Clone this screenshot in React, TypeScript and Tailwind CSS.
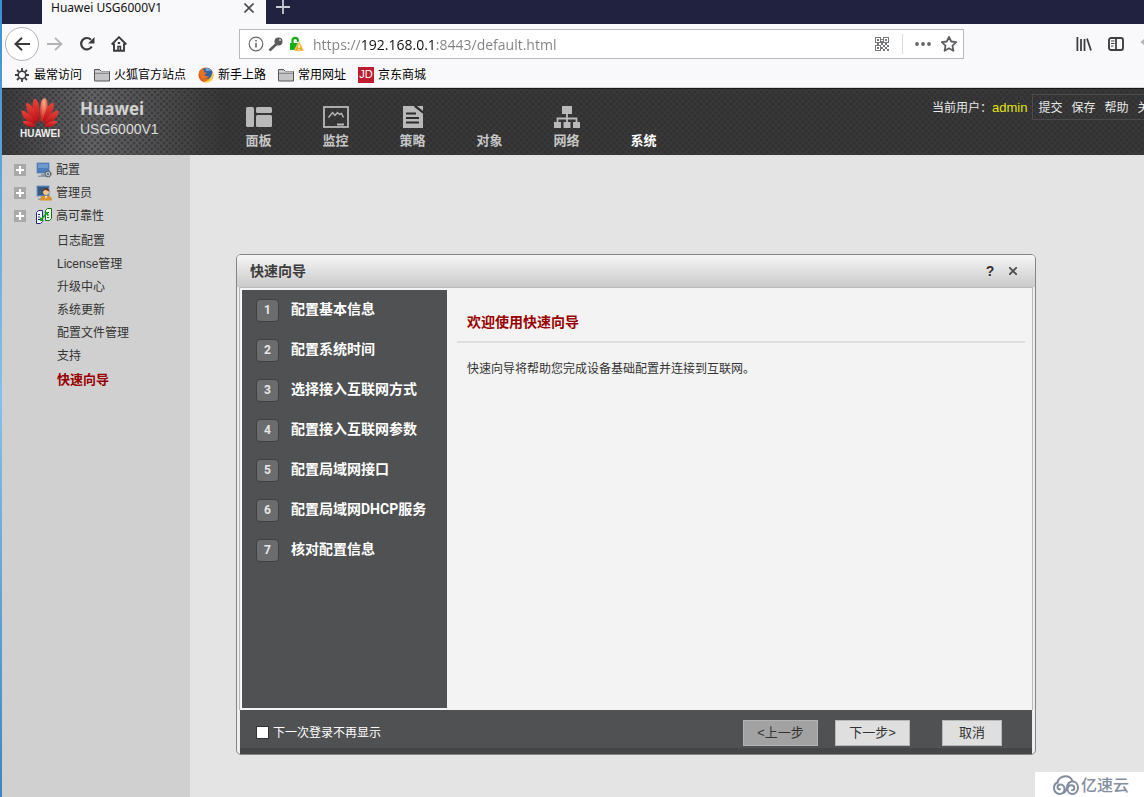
import type { ReactNode } from 'react';
import { clsx } from 'clsx';

const cjk = "font-['Liberation_Sans','Noto_Sans_CJK_SC',sans-serif]";
const ui = "font-['Open_Sans','Noto_Sans_CJK_SC',sans-serif]";

/* ---------- Browser icons ---------- */

function FolderIcon() {
  return (
    <svg width="16" height="14" viewBox="0 0 16 14" aria-hidden="true">
      <path d="M.5 12.5v-11h5.2l1.6 2h8.2v9.5H.5z" fill="#c4c4c6" stroke="#55565a" />
      <path d="M1 5h14" stroke="#55565a" />
      <path d="M1 4h14" stroke="#e9e9ea" />
    </svg>
  );
}

function GearIcon() {
  return (
    <svg width="14" height="14" viewBox="0 0 14 14" fill="none" stroke="#3f3f43" aria-hidden="true">
      <circle cx="7" cy="7" r="3.8" strokeWidth="1.6" />
      <path
        d="M7 0v3M7 11v3M0 7h3M11 7h3M2 2l2 2M10 10l2 2M12 2l-2 2M4 10l-2 2"
        strokeWidth="1.8"
      />
    </svg>
  );
}

function FirefoxIcon() {
  return (
    <svg width="16" height="16" viewBox="0 0 16 16" aria-hidden="true">
      <defs>
        <linearGradient id="ff-fox" x1="0" y1="0" x2="1" y2="1">
          <stop offset="0" stopColor="#d8541b" />
          <stop offset=".6" stopColor="#e2641b" />
          <stop offset="1" stopColor="#f6bb2a" />
        </linearGradient>
      </defs>
      <circle cx="8" cy="8" r="7.6" fill="url(#ff-fox)" />
      <circle cx="9" cy="6.4" r="5.4" fill="#2f62ab" />
      <path d="M7.4 1.4c2.4-.6 5 .2 6.2 2.6-1.8-1-3.6-.6-5 .2z" fill="#6cb6e6" />
      <path d="M1 4.5C2 3 3 2.6 3.5 1.5c.6 1 1.6 1.600 3.300 1.800L5.800 5c1 .6 2 .4 3 .6-.2 1.200-1.600 1.500-2.200 2.200.4 1.500 2.400 2 4.400 1-1 3-5.500 4-8 1.700z" fill="#e8731f" />
      <path d="M14.5 4.800c1.500 3.400.5 7.600-3 9.600-2 1-4.500 1-6.300.2 4 .4 7.800-2 9.300-9.800z" fill="#fbd13a" />
    </svg>
  );
}

function QrIcon() {
  return (
    <svg width="14" height="14" viewBox="0 0 14 14" fill="#75767a" aria-hidden="true">
      <path fillRule="evenodd" d="M0 0h6v6H0zM1 1v4h4V1zM8 0h6v6H8zM9 1v4h4V1zM0 8h6v6H0zM1 9v4h4V9z" />
      <path d="M2 2h2v2H2zM10 2h2v2h-2zM2 10h2v2H2zM6 2h2v1H6zM6 4h2v2H6zM2 6h2v2H2zM6 6h2v2H6zM10 6h2v2h-2zM8 8h2v2H8zM12 8h2v2h-2zM6 10h2v2H6zM10 10h2v2h-2zM8 12h2v2H8zM12 12h2v2h-2z" />
    </svg>
  );
}

function IconButton({ label, className, children }: { label: string; className?: string; children: ReactNode }) {
  return (
    <button type="button" aria-label={label} className={clsx('flex shrink-0 items-center justify-center', className)}>
      {children}
    </button>
  );
}

function TabStrip() {
  return (
    <div className="flex h-6 bg-[#20223f] pl-10">
      <div className="flex w-56 items-center justify-between bg-[#f9f9fb] pr-[9px] pb-2 pl-2">
        <span className="pl-px font-['Noto_Sans',sans-serif] text-xs leading-4 text-[#111]">Huawei USG6000V1</span>
        <IconButton label="关闭标签页" className="h-4 w-4">
          <svg width="10" height="10" viewBox="0 0 10 10" stroke="#4a4a4f" strokeWidth="1.6">
            <path d="M.5.5l9 9M9.5.5l-9 9" />
          </svg>
        </IconButton>
      </div>
      <IconButton label="新建标签页" className="ml-[9px] h-[14px] w-4">
        <svg width="14" height="14" viewBox="0 0 14 14" stroke="#c9c9d4" strokeWidth="1.8">
          <path d="M7 0v14M0 7h14" />
        </svg>
      </IconButton>
    </div>
  );
}

function NavBar() {
  return (
    <div className="flex h-10 items-center overflow-hidden bg-[#f9f9fb] pl-[3px]">
      <IconButton label="后退" className="h-[34px] w-[34px] rounded-full border border-[#b4b4b8] bg-white">
        <svg width="16" height="14" viewBox="0 0 16 14" fill="none" stroke="#3b3b3f" strokeWidth="2">
          <path d="M16 7H1.5M8 .8L1.5 7 8 13.2" />
        </svg>
      </IconButton>
      <IconButton label="前进" className="w-8">
        <svg width="16" height="14" viewBox="0 0 16 14" fill="none" stroke="#b3b3b6" strokeWidth="1.8">
          <path d="M0 7h14.5M8 .8L14.5 7 8 13.2" />
        </svg>
      </IconButton>
      <IconButton label="重新加载" className="w-8">
        <svg width="16" height="16" viewBox="0 0 16 16" fill="none" stroke="#3b3b3f" strokeWidth="2.2">
          <path d="M12.8 10.5A5.7 5.7 0 1 1 12 3.8" />
          <path d="M15.5 1v6.5H9z" fill="#3b3b3f" stroke="none" />
        </svg>
      </IconButton>
      <IconButton label="主页" className="w-8">
        <svg width="16" height="16" viewBox="0 0 16 16" fill="none" stroke="#3b3b3f" strokeWidth="1.9">
          <path d="M.7 8.5L8 1.2l7.3 7.3M3 7.5v7.3h10V7.5" />
          <path d="M7 15v-4.5h2.4V15" strokeWidth="1.6" />
          <path d="M6.8 6h2.4v2H6.8z" fill="#3b3b3f" stroke="none" />
        </svg>
      </IconButton>

      <div className="ml-[104px] flex h-[30px] flex-1 items-center gap-1 border border-[#b9b9bd] bg-white pr-1 pl-2">
        <svg width="16" height="16" viewBox="0 0 16 16" fill="none" stroke="#66666a" className="shrink-0">
          <circle cx="8" cy="8" r="6.8" strokeWidth="1.2" />
          <path d="M8 7v4.5M8 4v1.5" strokeWidth="1.6" />
        </svg>
        <svg width="16" height="16" viewBox="0 0 16 16" className="shrink-0">
          <path d="M9.5 7L1.5 14.5" stroke="#5c5c60" strokeWidth="2.6" />
          <circle cx="10.5" cy="5.5" r="4" fill="#5c5c60" />
          <circle cx="12" cy="4" r="1" fill="#d5d5d5" />
        </svg>
        <svg width="16" height="16" viewBox="0 0 16 16" className="shrink-0">
          <path d="M4.5 8V4.5a2.7 2.7 0 0 1 5.4 0V6" fill="none" stroke="#12b012" strokeWidth="2.2" />
          <path d="M2 7h9v7H2z" fill="#12b012" />
          <path d="M11 5l5 10H6z" fill="#fba81c" stroke="#fff" strokeWidth=".5" />
          <path d="M11 8.5V12M11 13v1" stroke="#fff" strokeWidth="1.3" />
        </svg>
        <input
          type="text"
          aria-label="地址"
          defaultValue="https://192.168.0.1:8443/default.html"
          className={clsx(
            'ml-[5px] min-w-0 flex-1 bg-clip-text text-[14px] text-transparent outline-none',
            'bg-[linear-gradient(90deg,#808084_48px,#111_48px,#111_122px,#808084_122px)]',
            ui,
          )}
        />
        <IconButton label="二维码" className="h-5 w-6">
          <QrIcon />
        </IconButton>
        <div className="mx-1 h-5 w-px bg-[#dcdcdf]" />
        <IconButton label="页面操作" className="h-5 w-6">
          <svg width="16" height="4" viewBox="0 0 16 4" fill="#66666a">
            <circle cx="2" cy="2" r="1.9" />
            <circle cx="8" cy="2" r="1.9" />
            <circle cx="14" cy="2" r="1.9" />
          </svg>
        </IconButton>
        <IconButton label="添加书签" className="h-5 w-5">
          <svg width="16" height="16" viewBox="0 0 16 16" fill="none" stroke="#5e5e62" strokeWidth="1.8" strokeLinejoin="round">
            <path d="M8 .9l2.2 4.6 5 .7-3.700 3.400.9 5.200L8 12.300l-4.400 2.500.9-5.200L.8 6.200l5-.7z" />
          </svg>
        </IconButton>
      </div>

      <div className="ml-28 flex w-[68px] shrink-0 gap-4 overflow-hidden">
        <IconButton label="我的足迹" className="w-4">
          <svg width="16" height="14" viewBox="0 0 16 14" fill="none" stroke="#3f3f43" strokeWidth="1.8">
            <path d="M1.4 0v14M5 2v12M8.5 2v12M11 1.5l4 12" />
          </svg>
        </IconButton>
        <IconButton label="侧栏" className="w-4">
          <svg width="16" height="14" viewBox="0 0 16 14" fill="none" stroke="#3f3f43">
            <rect x="1" y="1" width="14" height="12" rx="2" strokeWidth="1.9" />
            <path d="M8 1v12" strokeWidth="1.8" />
            <path d="M3 4h3.5M3 6.5h3.5M3 9h2.5" />
          </svg>
        </IconButton>
        <IconButton label="更多" className="w-4">
          <svg width="16" height="14" viewBox="0 0 16 14" fill="none" stroke="#b3b3b6" strokeWidth="2">
            <path d="M7 1L2 5l5 4" />
          </svg>
        </IconButton>
      </div>
    </div>
  );
}

const bookmarks = [
  { label: '最常访问', icon: <GearIcon /> },
  { label: '火狐官方站点', icon: <FolderIcon /> },
  { label: '新手上路', icon: <FirefoxIcon /> },
  { label: '常用网址', icon: <FolderIcon /> },
  {
    label: '京东商城',
    icon: (
      <span className="flex h-4 w-4 items-center justify-center bg-[#c01c30] text-[11px] leading-none text-white">JD</span>
    ),
  },
];

function BookmarkBar() {
  return (
    <nav className={clsx('flex h-6 items-center gap-3 border-b border-[#d8d8da] bg-[#f9f9fb] pb-0.5 pl-3', cjk)}>
      {bookmarks.map((b) => (
        <a key={b.label} href="#" className="flex shrink-0 items-center gap-1 text-xs leading-4 text-black">
          <span className="flex w-4 justify-center">{b.icon}</span>
          {b.label}
        </a>
      ))}
    </nav>
  );
}

/* ---------- Device console header ---------- */

function HuaweiMark() {
  return (
    <svg width="40" height="31" viewBox="0 0 42 33" aria-hidden="true">
      <defs>
        <linearGradient id="petal" x1="0" y1="0" x2="0" y2="1">
          <stop offset="0" stopColor="#e8453a" />
          <stop offset="1" stopColor="#b80d15" />
        </linearGradient>
        <radialGradient id="shine" cx=".5" cy=".2" r=".7">
          <stop offset="0" stopColor="#f6b08c" />
          <stop offset="1" stopColor="#d8281f" />
        </radialGradient>
      </defs>
      <g fill="url(#petal)">
        <path d="M20 27C14 20 11 11 14.5 2 20 1 21.5 14 20 27z" />
        <path d="M22 27C20.5 14 20 1 27 1 32 8 28 20 22 27z" fill="url(#shine)" />
        <path d="M18.5 28C10 22 5 13 6.5 6 12 6 17 16 18.5 28z" />
        <path d="M23.5 28C32 22 37 13 35.5 6 30 6 25 16 23.5 28z" />
        <path d="M17 29.5C7 27 .5 21 1.5 14 8 15 14 22 17 29.5z" />
        <path d="M25 29.5C35 27 41.5 21 40.5 14 34 15 28 22 25 29.5z" />
        <path d="M16.5 31.5C9 33 4 30 2.5 25.500 8 25 14 27 16.5 31.5z" />
        <path d="M25.5 31.5C33 33 38 30 39.5 25.500 34 25 28 27 25.5 31.5z" />
      </g>
    </svg>
  );
}

const menu = [
  {
    label: '面板',
    icon: (
      <svg width="26" height="22" viewBox="0 0 26 22" fill="#b9b9b9">
        <rect y="1" width="8" height="20" rx="1.5" />
        <rect x="10" y="1" width="16" height="6" rx="1.5" />
        <rect x="10" y="9" width="16" height="12" rx="1.5" />
      </svg>
    ),
  },
  {
    label: '监控',
    icon: (
      <svg width="26" height="22" viewBox="0 0 26 22" fill="none" stroke="#b9b9b9">
        <rect x="1" y="1" width="24" height="20" strokeWidth="1.8" />
        <path d="M5.5 11.5l4-5 2.500 3 2.500-3 2 2 2-1 2 4" strokeWidth="1.4" />
        <path d="M14 18.500h7" strokeWidth="2" />
      </svg>
    ),
  },
  {
    label: '策略',
    icon: (
      <svg width="22" height="22" viewBox="0 0 22 22">
        <path d="M1 0h12l8 7v15H1z" fill="#b9b9b9" />
        <path d="M15 0h6v5z" fill="#b9b9b9" />
        <path d="M12.500 0l9 7" stroke="#2c2c2d" strokeWidth="1.6" />
        <path d="M4 7.5h10M4 12h13M4 16.5h13" stroke="#2c2c2d" strokeWidth="1.8" />
      </svg>
    ),
  },
  { label: '对象' },
  {
    label: '网络',
    icon: (
      <svg width="26" height="22" viewBox="0 0 26 22" fill="#b9b9b9">
        <path d="M8 0h10v8H8zM0 16h7v6H0zM9.5 16h7v6h-7zM19 16h7v6h-7z" />
        <path d="M13 8v8M3.5 17v-4.5h19V17" fill="none" stroke="#b9b9b9" strokeWidth="1.8" />
      </svg>
    ),
  },
  { label: '系统', active: true },
];

function DeviceHeader() {
  return (
    <header
      className={clsx(
        'flex h-[67px] overflow-hidden border-t border-[#1a1a1b] bg-[#39393a]',
        'bg-[radial-gradient(circle,#28282988_1px,transparent_2px),radial-gradient(circle,#28282988_1px,transparent_2px),linear-gradient(90deg,#3a3a3c,#666668_90px,#39393a_220px)]',
        'bg-[length:6px_6px,6px_6px,100%_100%] bg-[position:0_0,3px_3px,0_0]',
        cjk,
      )}
    >
      <div className="flex w-[218px] shrink-0 pl-[18px]">
        <div className="flex w-10 flex-col items-center pt-2">
          <HuaweiMark />
          <span className="text-[10px] leading-3 font-bold text-[#eee]">HUAWEI</span>
        </div>
        <div className="pt-2 pl-5">
          <div className={clsx('text-[17px] leading-6 font-bold text-[#d2d2d2]', ui)}>Huawei</div>
          <div className="text-sm leading-4 text-[#dcdcdc]">USG6000V1</div>
        </div>
      </div>
      <nav className="flex shrink-0">
        {menu.map((m) => (
          <a
            key={m.label}
            href="#"
            className={clsx(
              'flex w-[77px] flex-col items-center pt-4 text-[13px] leading-5 font-bold',
              m.active ? 'text-white' : 'text-[#c6c6c6]',
            )}
          >
            <span className="mb-0.5 flex h-6 shrink-0 items-center">{m.icon}</span>
            {m.label}
          </a>
        ))}
      </nav>
      <div className="ml-auto flex w-[212px] shrink-0 items-start pt-[5px] text-xs leading-6 whitespace-nowrap text-[#e8e8e8]">
        <span className="pt-0.5">当前用户：</span>
        <span className="pt-0.5 pr-[5px] text-[13px] text-[#e3e30a]">admin</span>
        <div className="flex h-[26px] gap-[9px] border border-r-0 border-[#4b4b4d] pt-px pl-[5px]">
          {['提交', '保存', '帮助', '关于'].map((t) => (
            <a key={t} href="#">{t}</a>
          ))}
        </div>
      </div>
    </header>
  );
}

/* ---------- Sidebar tree ---------- */

function MonitorIcon({ kind }: { kind: 'gear' | 'user' }) {
  return (
    <svg width="16" height="16" viewBox="0 0 16 16" aria-hidden="true">
      <rect x=".5" y=".5" width="13" height="11" rx="1" fill="#4d7db8" stroke="#a9b4c2" />
      <path d="M2 2h10v4H2z" fill="#7199cb" />
      <path d="M5 12h4v1.5H5zM2 13.500h9V15H2z" fill="#8f99a5" />
      {kind === 'gear' ? (
        <>
          <circle cx="12" cy="12" r="2.8" fill="#c9ced4" stroke="#59636f" strokeWidth="1.6" strokeDasharray="1.7 .5" />
          <circle cx="12" cy="12" r="1.1" fill="#59636f" />
        </>
      ) : (
        <>
          <path d="M2 2h10v8H2z" fill="#355a80" />
          <circle cx="10" cy="7" r="3" fill="#f1c48c" />
          <path d="M6.500 7c0-5 7-5 7 0-1-1.500-4-2-5-2z" fill="#6b3410" />
          <path d="M4 15.500c0-4 2.500-5 6-5s6 1 6 5z" fill="#d9922e" />
          <path d="M9 11h2l-1 3z" fill="#fff" />
        </>
      )}
    </svg>
  );
}

function HaIcon() {
  return (
    <svg width="16" height="16" viewBox="0 0 16 16" aria-hidden="true">
      <path d="M.5 4.5l2-2h4v11l-2 2h-4z" fill="#f4f6ff" stroke="#1c2a8c" />
      <path d="M2 6.5h2M2 9h2M2 11.5h2" stroke="#1c2a8c" />
      <path d="M9.500 2.500l2-2h4v10l-2 2h-4z" fill="#eaffea" stroke="#156a15" />
      <path d="M11 4.5h2M11 7h2M11 9.5h2" stroke="#156a15" />
      <path d="M4.500 12L11 5" stroke="#18a018" strokeWidth="1.6" />
      <path d="M8 4h4v4zM4 9v4h4z" fill="#18a018" />
    </svg>
  );
}

const groups = [
  { label: '配置', icon: <MonitorIcon kind="gear" /> },
  { label: '管理员', icon: <MonitorIcon kind="user" /> },
  { label: '高可靠性', icon: <HaIcon /> },
];

const leaves = ['日志配置', 'License管理', '升级中心', '系统更新', '配置文件管理', '支持', '快速向导'];

function Sidebar() {
  return (
    <aside className={clsx('w-[188px] shrink-0 bg-[#d0d0d0] pt-[3px] text-xs leading-[23px] text-[#333]', cjk)}>
      <ul className="mb-[3px] pl-3">
        {groups.map((g) => (
          <li key={g.label} className="flex h-[23px] items-center">
            <button type="button" aria-label={`展开${g.label}`} className="flex h-3 w-3 items-center justify-center bg-[#a9a9a9]">
              <svg width="8" height="8" viewBox="0 0 8 8" stroke="#fff" strokeWidth="2">
                <path d="M4 0v8M0 4h8" />
              </svg>
            </button>
            <a href="#" className="flex items-center gap-1 pl-2.5">
              {g.icon}
              <span className="pt-0.5">{g.label}</span>
            </a>
          </li>
        ))}
      </ul>
      <ul className="pl-[55px]">
        {leaves.map((l) => (
          <li key={l} className="h-[23px]">
            <a href="#" className={clsx(l === '快速向导' && 'text-[13px] font-bold text-[#990000]')}>
              {l}
            </a>
          </li>
        ))}
      </ul>
    </aside>
  );
}

/* ---------- Wizard dialog ---------- */

const steps = [
  '配置基本信息',
  '配置系统时间',
  '选择接入互联网方式',
  '配置接入互联网参数',
  '配置局域网接口',
  '配置局域网DHCP服务',
  '核对配置信息',
];

const wizardButton = 'h-[26px] border text-[13px] leading-5 text-[#333]';

function QuickWizard() {
  return (
    <section
      role="dialog"
      aria-labelledby="wizard-title"
      className={clsx('w-full max-w-[800px] rounded-[5px] border border-[#858585] bg-[#eee]', cjk)}
    >
      <div className="flex h-8 items-center rounded-t bg-gradient-to-b from-[#f6f6f6] to-[#cacaca] pr-3.5 pl-[13px]">
        <h1 id="wizard-title" className="flex-1 text-sm font-bold text-[#3c3c3c]">快速向导</h1>
        <button type="button" aria-label="帮助" className="w-4 text-sm leading-4 font-bold text-[#333]">?</button>
        <IconButton label="关闭" className="ml-[7px] h-4 w-4">
          <svg width="8" height="8" viewBox="0 0 8 8" stroke="#4c4c4c" strokeWidth="1.8">
            <path d="M0 0l8 8M8 0L0 8" />
          </svg>
        </IconButton>
      </div>

      <div className="px-0.5">
        <div className="flex min-h-[423px] border-x border-t border-[#b9b9b9] bg-[#f3f3f3]">
          <ol className="my-0.5 ml-px w-[206px] shrink-0 border-l border-white bg-[#505153] pl-3.5 font-['Roboto','Noto_Sans_CJK_SC',sans-serif]">
            {steps.map((s, i) => (
              <li key={s} className="flex h-10 items-center gap-3 text-sm font-bold text-white">
                <span className="flex h-[23px] w-[23px] items-center justify-center rounded-sm border border-[#3f4042] bg-[#6b6c6e] text-xs text-[#e6e6e6]">
                  {i + 1}
                </span>
                <span className="pb-0.5">{s}</span>
              </li>
            ))}
          </ol>
          <div className="min-w-0 flex-1 pt-6 pr-[7px] pl-2.5">
            <h2 className="h-[31px] border-b-2 border-[#dedede] pl-2.5 text-sm leading-5 font-bold text-[#990000]">
              欢迎使用快速向导
            </h2>
            <p className="mt-4 pl-2.5 text-xs leading-5 text-[#333]">快速向导将帮助您完成设备基础配置并连接到互联网。</p>
          </div>
        </div>
        <div className="mx-px flex h-11 items-center bg-[linear-gradient(#505153_38px,#454648_38px)] pt-px pr-[30px] pl-4">
          <label className="flex flex-1 items-center gap-1 text-xs leading-5 text-white">
            <input type="checkbox" className="h-[13px] w-[13px] appearance-none border border-[#333] bg-white checked:bg-[#888]" />
            下一次登录不再显示
          </label>
          <button type="button" disabled className={clsx(wizardButton, 'w-[75px] border-[#b3b3b3] bg-[#a2a2a2]')}>
            &lt;上一步
          </button>
          <button type="button" className={clsx(wizardButton, 'ml-[17px] w-[75px] border-[#b8b8b8] bg-[#dfdfdf]')}>
            下一步&gt;
          </button>
          <button type="button" className={clsx(wizardButton, 'ml-8 w-[60px] border-[#b8b8b8] bg-[#dfdfdf]')}>
            取消
          </button>
        </div>
      </div>
    </section>
  );
}

function Watermark() {
  return (
    <div className="absolute right-0 bottom-0 flex h-[25px] w-[109px] items-center gap-0.5 bg-white pl-[18px]">
      <svg width="26" height="20" viewBox="0 0 26 20" fill="none" stroke="#858ea0" strokeWidth="2" strokeLinecap="round">
        <path d="M4.500 7.500C5 4 8.500 1.200 12.500 1.200c3.500 0 6 2 6.800 4.800" />
        <path d="M4.500 7.500C2.300 8.300 1 10.500 1 13c0 3.300 2.500 6 5.500 6s5-2.300 5-5-2-4.500-4-4.500-3 1.300-3 2.700 1.300 2.300 2.500 2.100" />
        <path d="M10 18c3-1 3.500-3.500 4-6 .6-3 2.500-5.500 5.500-5.500 3.300 0 5.500 2.800 5.500 6.200S22.500 19 19.500 19s-5-2.300-5-4.700 1.700-4 3.800-4 3 1.300 3 2.700-1 2.300-2.300 2.300" />
      </svg>
      <span className="pb-0.5 font-['Noto_Sans_CJK_SC',sans-serif] text-base leading-6 font-medium text-[#858ea0]">亿速云</span>
    </div>
  );
}

export default function App() {
  return (
    <div className="flex min-h-screen">
      <div className="w-0.5 shrink-0 bg-gradient-to-b from-[#3b8fd0] via-[#86c0ea] to-[#3a86c4]" />
      <div className="flex min-w-0 flex-1 flex-col">
        <TabStrip />
        <NavBar />
        <BookmarkBar />
        <DeviceHeader />
        <div className="flex flex-1">
          <Sidebar />
          <main className="relative min-w-0 flex-1 bg-[#e4e4e4] px-[46px] pt-[99px]">
            <QuickWizard />
            <Watermark />
          </main>
        </div>
      </div>
    </div>
  );
}
